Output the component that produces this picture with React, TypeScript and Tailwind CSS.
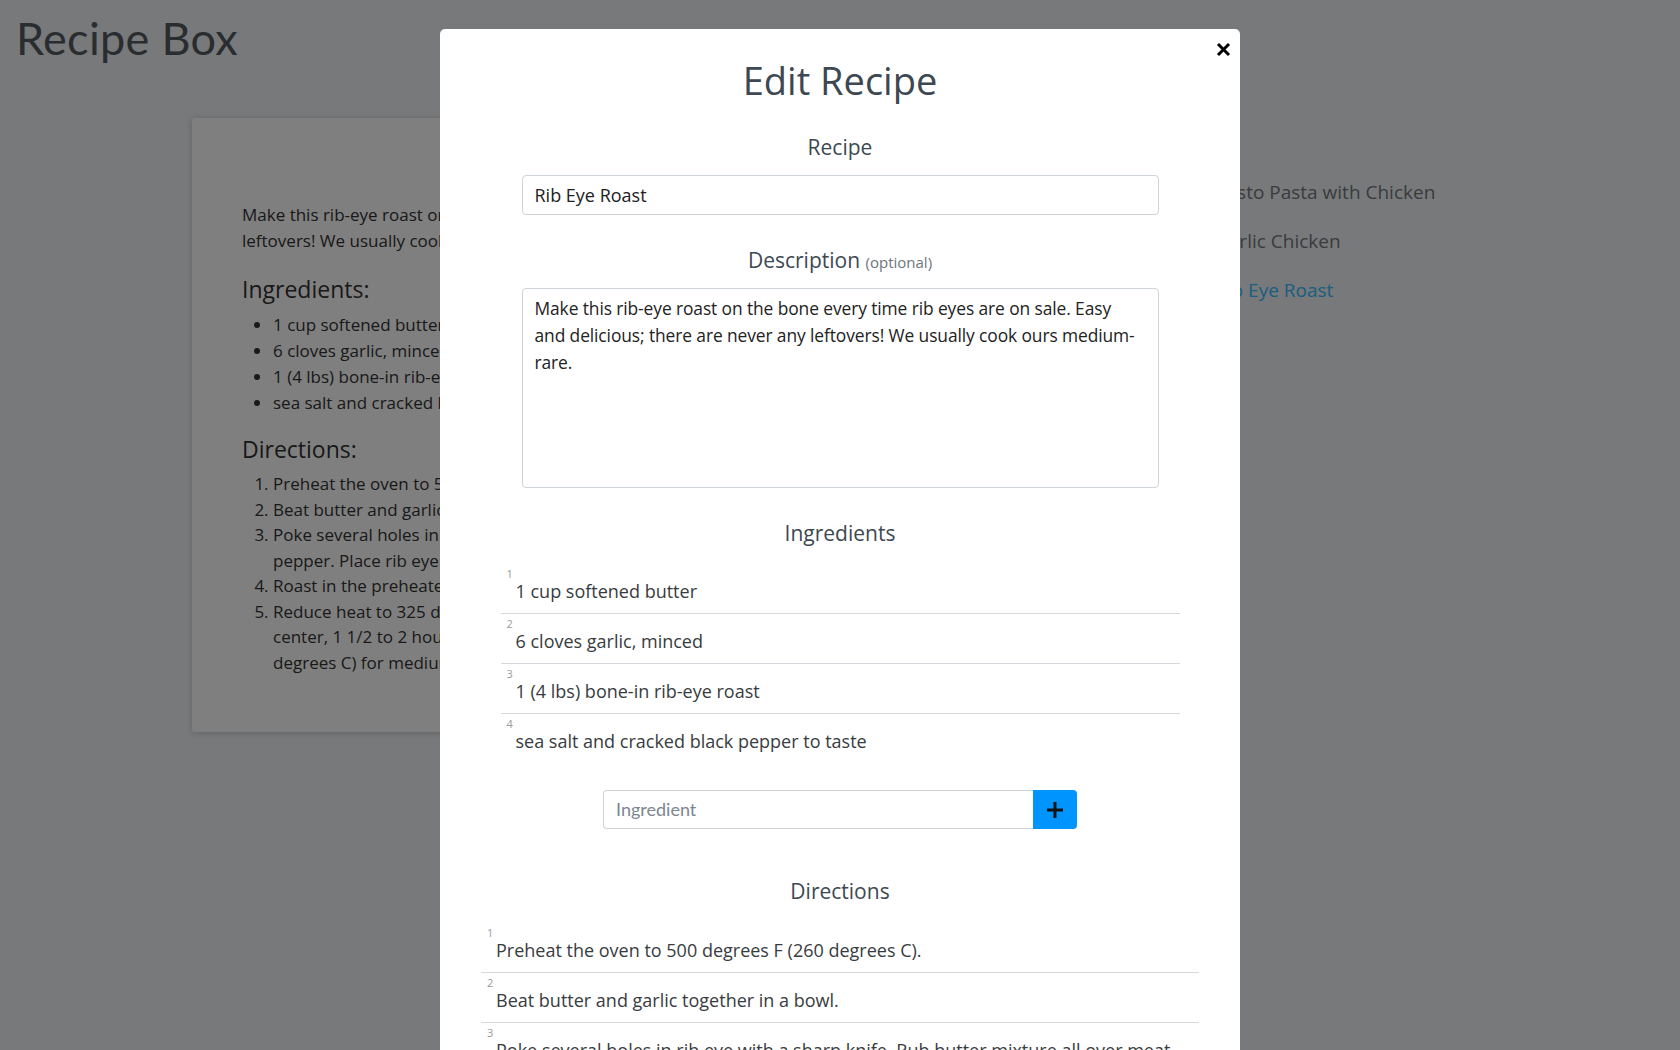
import { useState } from "react";

const ingredients = [
  "1 cup softened butter",
  "6 cloves garlic, minced",
  "1 (4 lbs) bone-in rib-eye roast",
  "sea salt and cracked black pepper to taste",
];

const directions = [
  "Preheat the oven to 500 degrees F (260 degrees C).",
  "Beat butter and garlic together in a bowl.",
  "Poke several holes in rib eye with a sharp knife. Rub butter mixture all over meat and season with sea salt and cracked black pepper. Place rib eye fat-side up in a roasting pan.",
  "Roast in the preheated oven for 20 minutes.",
  "Reduce heat to 325 degrees F (165 degrees C) and continue roasting until the meat is cooked to your liking in the center, 1 1/2 to 2 hours. An instant-read thermometer inserted into the center should read 130 degrees F (54 degrees C) for medium-rare.",
];

const description =
  "Make this rib-eye roast on the bone every time rib eyes are on sale. Easy and delicious; there are never any leftovers! We usually cook ours medium-rare.";

const recipes = ["Pesto Pasta with Chicken", "Garlic Chicken", "Rib Eye Roast"];

function NumberedList({ items, width }: { items: string[]; width: string }) {
  return (
    <ol className={`${width} text-[18px] leading-[27px] text-[#383c40]`}>
      {items.map((item, i) => (
        <li key={i} className="relative border-b border-[#d5d8dd] pt-[14px] pb-[8px] pl-[15px] last:border-b-0">
          <span className="absolute left-[6px] top-[4px] text-[11px] leading-[12px] text-[#9a9a9a]">{i + 1}</span>
          {item}
        </li>
      ))}
    </ol>
  );
}

export default function App() {
  const [name, setName] = useState("Rib Eye Roast");
  const [desc, setDesc] = useState(description);
  const [newIngredient, setNewIngredient] = useState("");

  return (
    <div className="relative h-screen overflow-hidden bg-[#f0f2f6] font-['Open_Sans',sans-serif] text-[#333]">
      {/* page behind the modal */}
      <h1 className="pl-[16px] pt-[8px] font-['Lato',sans-serif] text-[45px] leading-[60px] tracking-[0.3px] text-[#555a60]">
        Recipe Box
      </h1>
      <div className="mt-[50px] flex items-start pl-[192px]">
        <div className="w-[960px] rounded-[3px] bg-white px-[50px] pt-[50px] pb-[57px] shadow-[0_1px_6px_rgba(0,0,0,0.18)]">
          <h2 className="text-center text-[26px] leading-[34px]">Rib Eye Roast</h2>
          <p className="text-[17px] leading-[26px]">{description}</p>
          <h3 className="mt-[19px] text-[23px] leading-[32px]">Ingredients:</h3>
          <ul className="mt-[7px] list-disc pl-[31px] text-[17px] leading-[26px]">
            {ingredients.map((ing) => (
              <li key={ing}>{ing}</li>
            ))}
          </ul>
          <h3 className="mt-[17px] text-[23px] leading-[32px]">Directions:</h3>
          <ol className="mt-[6px] list-decimal pl-[31px] text-[17px] leading-[25.5px]">
            <li>{directions[0]}</li>
            <li>{directions[1]}</li>
            <li>
              Poke several holes in rib eye with a sharp knife. Rub butter mixture all over and season with salt and
              <br />
              pepper. Place rib eye fat-side up in a roasting pan.
            </li>
            <li>{directions[3]}</li>
            <li>
              Reduce heat to 325 degrees F (165 degrees C) and continue roasting until meat is cooked in the
              <br />
              center, 1 1/2 to 2 hours. A thermometer inserted into the center should read 130 degrees F (54
              <br />
              degrees C) for medium-rare.
            </li>
          </ol>
        </div>
        <ul className="ml-[63px] mt-[60px] flex flex-col gap-[21px] text-[19px] leading-[28px]">
          {recipes.map((r) => (
            <li key={r} className={r === "Rib Eye Roast" ? "text-[#36bcff]" : "text-[#74777b]"}>
              {r}
            </li>
          ))}
        </ul>
      </div>

      {/* modal */}
      <div className="fixed inset-0 overflow-hidden bg-black/50">
        <div className="relative mx-auto mt-[29px] w-[800px] rounded-[5px] bg-white pt-[28px] pb-[40px]">
          <button className="absolute right-[9px] top-[13px] p-0" aria-label="Close">
            <svg width="15" height="15" viewBox="0 0 15 15">
              <path d="M2 2 L13 13 M13 2 L2 13" stroke="#000" strokeWidth="3" />
            </svg>
          </button>
          <h2 className="text-center text-[38px] leading-[46px] text-[#3d4852]">Edit Recipe</h2>

          <div className="mt-[30px] flex flex-col items-center">
            <label className="text-[21px] leading-[28px] text-[#3d4852]">Recipe</label>
            <input
              className="mt-[14px] h-[40px] w-[637px] rounded-[4px] border border-[#ced4da] px-[12px] text-[18px] text-[#222] outline-none"
              value={name}
              onChange={(e) => setName(e.target.value)}
            />

            <label className="mt-[31px] text-[21px] leading-[28px] text-[#3d4852]">
              Description <span className="text-[15px] text-[#6c757d]">(optional)</span>
            </label>
            <textarea
              className="mt-[12px] h-[200px] w-[637px] resize-none rounded-[4px] border border-[#ced4da] px-[12px] py-[6px] text-[17.4px] leading-[27px] tracking-[-0.1px] text-[#222] outline-none"
              value={desc}
              onChange={(e) => setDesc(e.target.value)}
            />

            <h3 className="mt-[31px] text-[21px] leading-[28px] text-[#3d4852]">Ingredients</h3>
            <div className="mt-[17px]">
              <NumberedList items={ingredients} width="w-[679px]" />
            </div>

            <div className="mt-[27px] flex h-[39px] w-[474px]">
              <input
                className="min-w-0 flex-1 rounded-l-[4px] border border-r-0 border-[#ced4da] px-[12px] font-['Lato',sans-serif] text-[18px] text-[#222] outline-none placeholder:text-[#7d8691]"
                placeholder="Ingredient"
                value={newIngredient}
                onChange={(e) => setNewIngredient(e.target.value)}
              />
              <button className="flex w-[44px] items-center justify-center rounded-r-[4px] bg-[#0094ff]">
                <svg width="18" height="18" viewBox="0 0 18 18">
                  <path d="M9 1 V17 M1 9 H17" stroke="#111" strokeWidth="3" />
                </svg>
              </button>
            </div>

            <h3 className="mt-[48px] text-[21px] leading-[28px] text-[#3d4852]">Directions</h3>
            <div className="mt-[18px]">
              <NumberedList items={directions} width="w-[718px]" />
            </div>
          </div>
        </div>
      </div>
    </div>
  );
}
